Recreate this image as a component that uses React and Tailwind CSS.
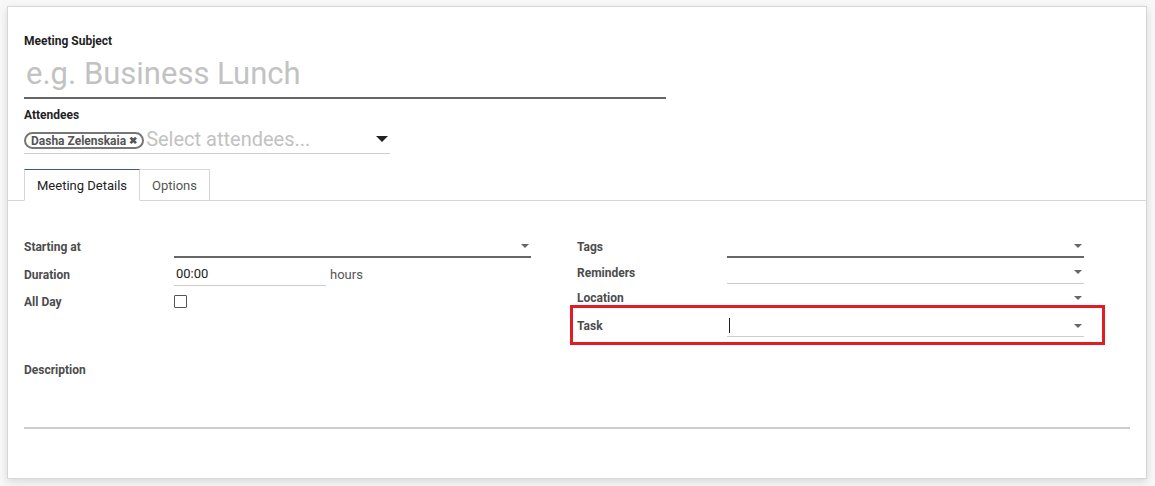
import React from 'react';

const font = { fontFamily: 'Roboto, "Liberation Sans", sans-serif' };

function Caret({ big }) {
    return big ? (
        <span className="block w-0 h-0 border-l-[6px] border-r-[6px] border-t-[6px] border-l-transparent border-r-transparent border-t-[#222]"></span>
    ) : (
        <span className="block w-0 h-0 border-l-[4px] border-r-[4px] border-t-[4px] border-l-transparent border-r-transparent border-t-[#666]"></span>
    );
}

function Field({ label, children, className = '' }) {
    return (
        <div className={'flex items-center ' + className}>
            <div className="w-[150px] shrink-0 text-[12px] font-bold text-[#4c4c4c]">{label}</div>
            <div className="flex-1">{children}</div>
        </div>
    );
}

function Many2one({ thick, none, cursor }) {
    return (
        <div className={'flex items-center justify-between h-[22px] pr-[2px] ' + (none ? '' : thick ? 'border-b-2 border-[#666]' : 'border-b border-[#ccc]')}>
            <span>{cursor && <span className="block w-px h-[15px] bg-[#222] ml-[2px]"></span>}</span>
            <Caret />
        </div>
    );
}

export default function App() {
    return (
        <div className="min-h-screen bg-[#f7f7f7] pt-[6px] pl-[7px]" style={font}>
            <div className="w-[1140px] h-[473px] bg-white border border-[#d4d6d9] shadow-[0_3px_8px_rgba(0,0,0,0.12)]">
                {/* header */}
                <div className="px-[16px] pt-[27px]">
                    <div className="text-[12px] font-bold text-[#1f1f1f] leading-[14px]">Meeting Subject</div>
                    <div className="w-[642px] border-b-2 border-[#666] h-[51px] flex items-end pb-[5px]">
                        <span className="text-[31px] leading-[36px] text-[#c2c2c2] pl-[2px]">e.g. Business Lunch</span>
                    </div>
                    <div className="text-[12px] font-bold text-[#1f1f1f] leading-[14px] mt-[9px]">Attendees</div>
                    <div className="w-[366px] border-b border-[#ccc] h-[30px] mt-[2px] flex items-center justify-between">
                        <div className="flex items-center">
                            <span className="flex items-center h-[17px] mt-[4px] px-[5px] rounded-full border-2 border-[#777] text-[12px] font-bold text-[#555] leading-none">
                                Dasha Zelenskaia
                                <span className="ml-[3px] text-[10px] text-[#555]">✖</span>
                            </span>
                            <span className="text-[20px] text-[#c2c2c2] ml-[2px] leading-none">Select attendees...</span>
                        </div>
                        <span className="flex mr-[2px]"><Caret big /></span>
                    </div>
                </div>
                {/* tabs */}
                <div className="mt-[15px] border-b border-[#d4d6d9] flex pl-[16px] h-[32px]">
                    <div className="h-[32px] px-[12px] pt-[1px] flex items-center border border-[#d4d6d9] border-t-[#3b5a8e] border-b-white bg-white text-[13px] text-[#222] mb-[-1px]">Meeting Details</div>
                    <div className="h-[31px] px-[12px] pt-[1px] flex items-center border border-l-0 border-[#d4d6d9] border-b-0 text-[13px] text-[#555]">Options</div>
                </div>
                {/* body */}
                <div className="px-[16px] pt-[32px]">
                    <div className="flex gap-[46px]">
                        <div className="w-[507px] flex flex-col">
                            <Field label="Starting at" className="h-[28px]"><Many2one thick /></Field>
                            <Field label="Duration" className="h-[27px]">
                                <div className="flex items-center">
                                    <div className="w-[152px] h-[23px] border-b border-[#ccc] text-[13px] text-[#222] flex items-center pl-[2px]">00:00</div>
                                    <span className="text-[13px] text-[#555] ml-[4px]">hours</span>
                                </div>
                            </Field>
                            <Field label="All Day" className="h-[27px]">
                                <span className="block w-[13px] h-[13px] border border-[#555] rounded-[1px]"></span>
                            </Field>
                        </div>
                        <div className="w-[507px] flex flex-col relative">
                            <Field label="Tags" className="h-[27px]"><Many2one thick /></Field>
                            <Field label="Reminders" className="h-[25px]"><Many2one /></Field>
                            <Field label="Location" className="h-[26px]"><Many2one none /></Field>
                            <Field label="Task" className="h-[30px]"><Many2one cursor /></Field>
                            <div className="absolute left-[-7px] top-[72px] w-[535px] h-[40px] border-[3px] border-[#e31b23] pointer-events-none"></div>
                        </div>
                    </div>
                    <div className="text-[12px] font-bold text-[#4c4c4c] mt-[20px]">Description</div>
                    <div className="h-[50px] border-b-2 border-[#ccc] w-[1106px]"></div>
                </div>
            </div>
        </div>
    );
}
